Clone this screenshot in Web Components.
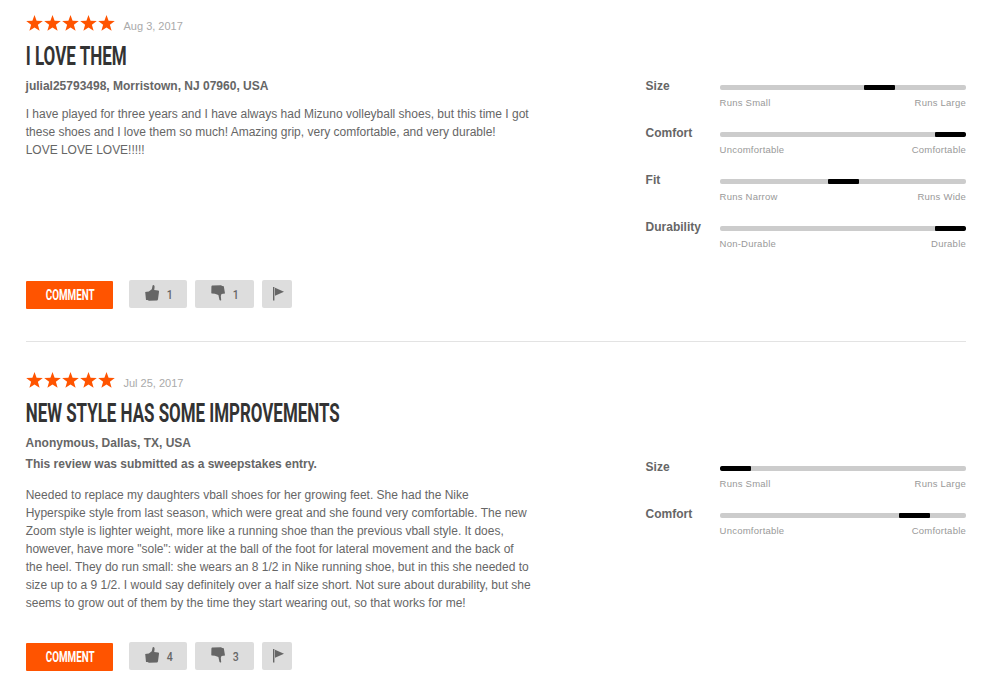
<!DOCTYPE html>
<html lang="en">
<head>
<meta charset="utf-8">
<title>Reviews</title>
<style>
  body {
    margin: 0;
    height: 676px;
    overflow: hidden;
    background: #fff;
    color: #666;
    font: 12px/18px "Liberation Sans", Arial, sans-serif;
  }
</style>
</head>
<body>
<review-list>
  <product-review date="Aug 3, 2017" heading="I LOVE THEM" heading-width="101" author="julial25793498, Morristown, NJ 07960, USA" up="1" down="1">
    <review-line width="503">I have played for three years and I have always had Mizuno volleyball shoes, but this time I got</review-line>
    <review-line width="470">these shoes and I love them so much! Amazing grip, very comfortable, and very durable!</review-line>
    <review-line width="119">LOVE LOVE LOVE!!!!!</review-line>
    <rating-scale slot="ratings" label="Size" low="Runs Small" high="Runs Large" offset="144"></rating-scale>
    <rating-scale slot="ratings" label="Comfort" low="Uncomfortable" high="Comfortable" offset="215"></rating-scale>
    <rating-scale slot="ratings" label="Fit" low="Runs Narrow" high="Runs Wide" offset="108"></rating-scale>
    <rating-scale slot="ratings" label="Durability" low="Non-Durable" high="Durable" offset="215"></rating-scale>
  </product-review>
  <product-review date="Jul 25, 2017" heading="NEW STYLE HAS SOME IMPROVEMENTS" heading-width="314" author="Anonymous, Dallas, TX, USA" note="This review was submitted as a sweepstakes entry." up="4" down="3">
    <review-line width="443">Needed to replace my daughters vball shoes for her growing feet. She had the Nike</review-line>
    <review-line width="501">Hyperspike style from last season, which were great and she found very comfortable. The new</review-line>
    <review-line width="478">Zoom style is lighter weight, more like a running shoe than the previous vball style. It does,</review-line>
    <review-line width="488">however, have more "sole": wider at the ball of the foot for lateral movement and the back of</review-line>
    <review-line width="503">the heel. They do run small: she wears an 8 1/2 in Nike running shoe, but in this she needed to</review-line>
    <review-line width="505">size up to a 9 1/2. I would say definitely over a half size short. Not sure about durability, but she</review-line>
    <review-line width="440">seems to grow out of them by the time they start wearing out, so that works for me!</review-line>
    <rating-scale slot="ratings" label="Size" low="Runs Small" high="Runs Large" offset="0"></rating-scale>
    <rating-scale slot="ratings" label="Comfort" low="Uncomfortable" high="Comfortable" offset="179"></rating-scale>
  </product-review>
</review-list>

<script>
// Creates the shadow root and fills it with the given markup
const render = (host, html) => {
  host.attachShadow({ mode: 'open' }).innerHTML = html;
};

class ReviewList extends HTMLElement {
  constructor() {
    super();
    render(this, `
      <style>
        :host { display: block; width: 940px; padding: 12px 0 0 26px; }
        ::slotted(product-review:not(:first-child)) {
          margin-top: 33px;
          padding-top: 27px;
          border-top: 1px solid #e3e3e3;
        }
      </style>
      <slot></slot>
    `);
  }
}

// One line of text, set to a fixed width
class ReviewLine extends HTMLElement {
  connectedCallback() {
    const size = this.getAttribute('size') || 12;
    const height = this.getAttribute('height') || 18;
    const base = this.getAttribute('base') || 13;
    render(this, `
      <style>
        :host { display: block; height: ${height}px; }
        svg { display: block; overflow: visible; }
        text { fill: currentColor; font-size: ${size}px; white-space: pre; }
      </style>
      <svg width="${this.getAttribute('width')}" height="${height}">
        <text x="-0.3" y="${base}" textLength="${this.getAttribute('width')}" lengthAdjust="spacingAndGlyphs">${this.textContent}</text>
      </svg>
    `);
  }
}

class StarRating extends HTMLElement {
  constructor() {
    super();
    const star = '<svg width="17" height="17" viewBox="0 0 17 17"><path d="M8.5 0l2.1 5.8 6.2.2-4.9 3.8 1.7 6-5.1-3.4-5.1 3.4 1.7-6L.2 6l6.2-.2z"/></svg>';
    render(this, `
      <style>
        :host { display: flex; gap: 1px; }
        svg { fill: #ff5400; }
      </style>
      ${star.repeat(5)}
    `);
  }
}

class RatingScale extends HTMLElement {
  connectedCallback() {
    const get = (name) => this.getAttribute(name);
    render(this, `
      <style>
        :host { display: flex; height: 47px; }
        .label { width: 74px; font-weight: bold; text-indent: -.4px; }
        .scale { width: 246px; padding-top: 8px; }
        .track { height: 5px; border-radius: 2px; background: #ccc; overflow: hidden; }
        .mark { width: 31px; height: 5px; margin-left: ${get('offset')}px; border-radius: 1px; background: #000; }
        .ends {
          display: flex;
          justify-content: space-between;
          padding-top: 6px;
          color: #999;
          font-size: 9.5px;
          letter-spacing: .23px;
          line-height: 14px;
          text-indent: -.4px;
        }
      </style>
      <div class="label">${get('label')}</div>
      <div class="scale">
        <div class="track"><div class="mark"></div></div>
        <div class="ends"><span>${get('low')}</span><span>${get('high')}</span></div>
      </div>
    `);
  }
}

const icons = {
  up: '<svg width="15" height="16" viewBox="0 0 15 16"><path d="M.2 6.9l3.6-.3 3-2.4L7.6.6C7.8-.1 9-.1 9.4.7c.4 1.3 0 2.9-.2 4.4l3.9.4c.7.1 1 .6.9 1.3L13 14.2c-.2.9-.7 1.3-1.5 1.3L4 15.8l-1.5-.9H1z"/></svg>',
  down: '<svg width="15" height="16" viewBox="0 0 15 16"><path d="M.4 1.9C.4 1 .9.7 1.6.6L10 .3l1.3.8 1.5.1 1.2 7.4-3.5.5-.7 1.8.4 4c0 .7-1.2.8-1.7.1L7.4 10 3.9 8.8.9 8.6C.4 8.5.2 8.2.3 7.7z"/></svg>',
  flag: '<svg width="11" height="14" viewBox="0 0 11 14"><path d="M0 0h1.4v13.5H0zM2 .7l9 4.1-9 4z"/></svg>',
};

class VoteButton extends HTMLElement {
  connectedCallback() {
    const type = this.getAttribute('type');
    const count = this.getAttribute('count');
    render(this, `
      <style>
        :host {
          display: flex;
          box-sizing: border-box;
          height: 28px;
          padding: ${type === 'flag' ? '7px 0 0 11px' : '5px 0 0 16px'};
          gap: 7px;
          border-radius: 2px;
          background: #ddd;
          cursor: pointer;
        }
        svg { fill: #666; flex: none; }
        .count { font-family: Roboto, sans-serif; font-weight: 500; }
      </style>
      ${icons[type]}
      ${count ? `<review-line class="count" size="12.5" width="6" base="14">${count}</review-line>` : ''}
    `);
  }
}

class ProductReview extends HTMLElement {
  connectedCallback() {
    const get = (name) => this.getAttribute(name);
    const note = get('note');
    render(this, `
      <style>
        :host { display: block; }
        .columns { display: flex; justify-content: space-between; }
        .main { width: 520px; }
        .top { display: flex; gap: 8.5px; height: 28px; padding-top: 3px; box-sizing: border-box; }
        .date { color: #aaa; font-size: 11px; line-height: 22px; }
        .heading, .comment { font-family: Roboto, sans-serif; font-weight: bold; }
        .heading { color: #333; }
        .author { margin-top: 7px; font-weight: bold; line-height: 21px; text-indent: -.4px; }
        .text { margin-top: ${note ? 11 : 8}px; }
        .ratings { width: 320px; padding-top: ${note ? 89 : 65}px; }
        ::slotted(rating-scale:last-child) { height: 31px; }
        .actions { display: flex; padding-top: ${note ? 30 : 31}px; }
        :host(:first-child) { margin-bottom: -1px; }
        .comment {
          box-sizing: border-box;
          width: 87px;
          height: 28px;
          margin: 1px 16px 0 0;
          padding: 5px 0 0 19.5px;
          border-radius: 1px;
          background: #ff5400;
          color: #fff;
          cursor: pointer;
        }
        .up { width: 58px; margin-right: 8px; }
        .down { width: 59px; margin-right: 8px; }
        .flag { width: 30px; }
      </style>
      <div class="columns">
        <div class="main">
          <div class="top"><star-rating></star-rating><span class="date">${get('date')}</span></div>
          <review-line class="heading" size="26" height="29" base="24.5" width="${get('heading-width')}">${get('heading')}</review-line>
          <div class="author">${get('author')}</div>
          ${note ? `<div class="author" style="margin-top: 0">${note}</div>` : ''}
          <div class="text"><slot></slot></div>
        </div>
        <div class="ratings"><slot name="ratings"></slot></div>
      </div>
      <div class="actions">
        <div class="comment"><review-line size="14" width="49" base="14">COMMENT</review-line></div>
        <vote-button class="up" type="up" count="${get('up')}"></vote-button>
        <vote-button class="down" type="down" count="${get('down')}"></vote-button>
        <vote-button class="flag" type="flag"></vote-button>
      </div>
    `);
  }
}

customElements.define('review-list', ReviewList);
customElements.define('review-line', ReviewLine);
customElements.define('star-rating', StarRating);
customElements.define('rating-scale', RatingScale);
customElements.define('vote-button', VoteButton);
customElements.define('product-review', ProductReview);
</script>
</body>
</html>
